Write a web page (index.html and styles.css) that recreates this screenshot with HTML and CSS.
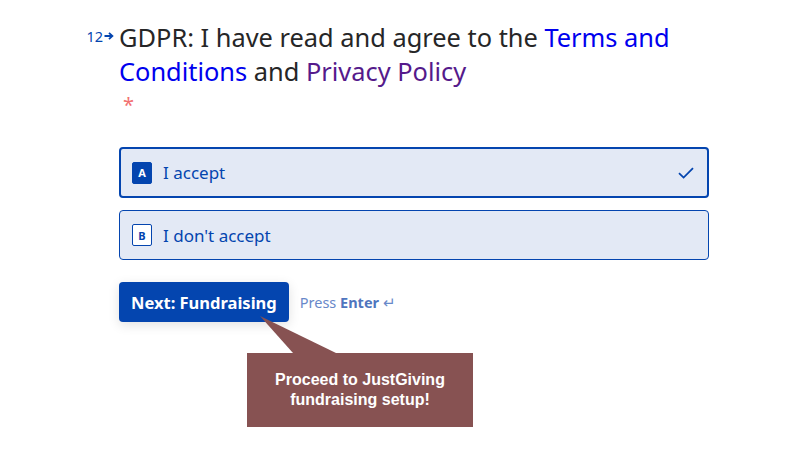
FILE: index.html
```html
<!DOCTYPE html>
<html>
<head>
<meta charset="utf-8">
<link rel="stylesheet" href="styles.css">
</head>
<body>
<div class="page">
  <div class="question">
    <div class="qnum"><span>12</span><svg class="qarrow" width="10" height="10" viewBox="0 0 10 10"><path d="M0.5 5H8M5 1.8L8.4 5L5 8.2" fill="none" stroke="#0445AF" stroke-width="1.8"/></svg></div>
    <div class="content">
      <h1 class="title">GDPR: I have read and agree to the <span class="link">Terms and Conditions</span> and <span class="visited">Privacy Policy</span></h1>
      <div class="req">*</div>
      <div class="options">
        <div class="option selected">
          <span class="key key-filled">A</span>
          <span class="label">I accept</span>
          <svg class="check" width="16" height="12" viewBox="0 0 16 12"><path d="M1 6.2L5.6 10.6L15 1.2" fill="none" stroke="#0445AF" stroke-width="1.8"/></svg>
        </div>
        <div class="option">
          <span class="key">B</span>
          <span class="label">I don't accept</span>
        </div>
      </div>
      <div class="actions">
        <button class="next">Next: Fundraising</button>
        <span class="hint">Press <b>Enter</b> ↵</span>
      </div>
    </div>
  </div>
  <div class="tooltip">
    <svg class="tip-arrow" width="80" height="40" viewBox="0 0 80 40"><polygon points="0,0 33,37 76,37" fill="#875252"/></svg>
    <div class="tip-box">Proceed to JustGiving fundraising setup!</div>
  </div>
</div>
</body>
</html>
```
FILE: styles.css
```css
* { box-sizing: border-box; }
html, body { margin: 0; padding: 0; background: #fff; }
body { font-family: "Noto Sans", "Open Sans", sans-serif; width: 797px; height: 456px; overflow: hidden; }
.page { position: relative; width: 797px; height: 456px; padding-top: 20px; }
.question { display: flex; align-items: flex-start; }
.qnum { width: 119px; display: flex; justify-content: flex-end; align-items: center; gap: 1px; padding-right: 5px; padding-top: 7px; color: #0445AF; font-size: 14.5px; line-height: 18px; }
.content { width: 590px; }
.title { margin: 0; font-weight: 400; font-size: 25.4px; line-height: 34px; color: #262627; }
.link { color: #0000EE; }
.visited { color: #551A8B; }
.req { color: #F27171; font-size: 20px; line-height: 22px; padding-left: 4px; margin-top: 6px; }
.options { display: flex; flex-direction: column; gap: 12px; margin-top: 31px; }
.option { display: flex; align-items: center; height: 50px; border: 1px solid #0445AF; border-radius: 4px; background: #E3E9F5; padding-left: 12px; padding-right: 14px; color: #0445AF; }
.option.selected { border-width: 2px; padding-left: 11px; padding-right: 13px; height: 51px; }
.key { display: flex; align-items: center; justify-content: center; width: 20px; height: 22px; border: 1px solid #0445AF; border-radius: 2px; background: #fff; font-size: 11px; font-weight: 700; color: #0445AF; margin-right: 11px; }
.key-filled { background: #0445AF; color: #fff; }
.label { font-size: 17px; flex: 1; }
.check { display: block; }
.actions { display: flex; align-items: center; margin-top: 22px; }
.next { font-family: inherit; height: 40px; padding: 0 12px; background: #0445AF; color: #fff; border: none; border-radius: 4px; font-size: 16.5px; font-weight: 700; box-shadow: 0 3px 12px rgba(0,0,0,0.12); }
.hint { margin-left: 11px; font-size: 14.5px; color: #6888C9; }
.hint b { color: #4F75BE; font-weight: 700; }
.tooltip { position: absolute; left: 247px; top: 316px; }
.tip-arrow { position: absolute; left: 13px; top: 0; }
.tip-box { position: absolute; left: 0; top: 37px; width: 226px; height: 74px; background: #875252; color: #fff; font-family: "Liberation Sans", Arial, sans-serif; font-weight: 700; font-size: 16px; line-height: 20px; display: flex; align-items: center; justify-content: center; text-align: center; padding: 0 20px; }
```
